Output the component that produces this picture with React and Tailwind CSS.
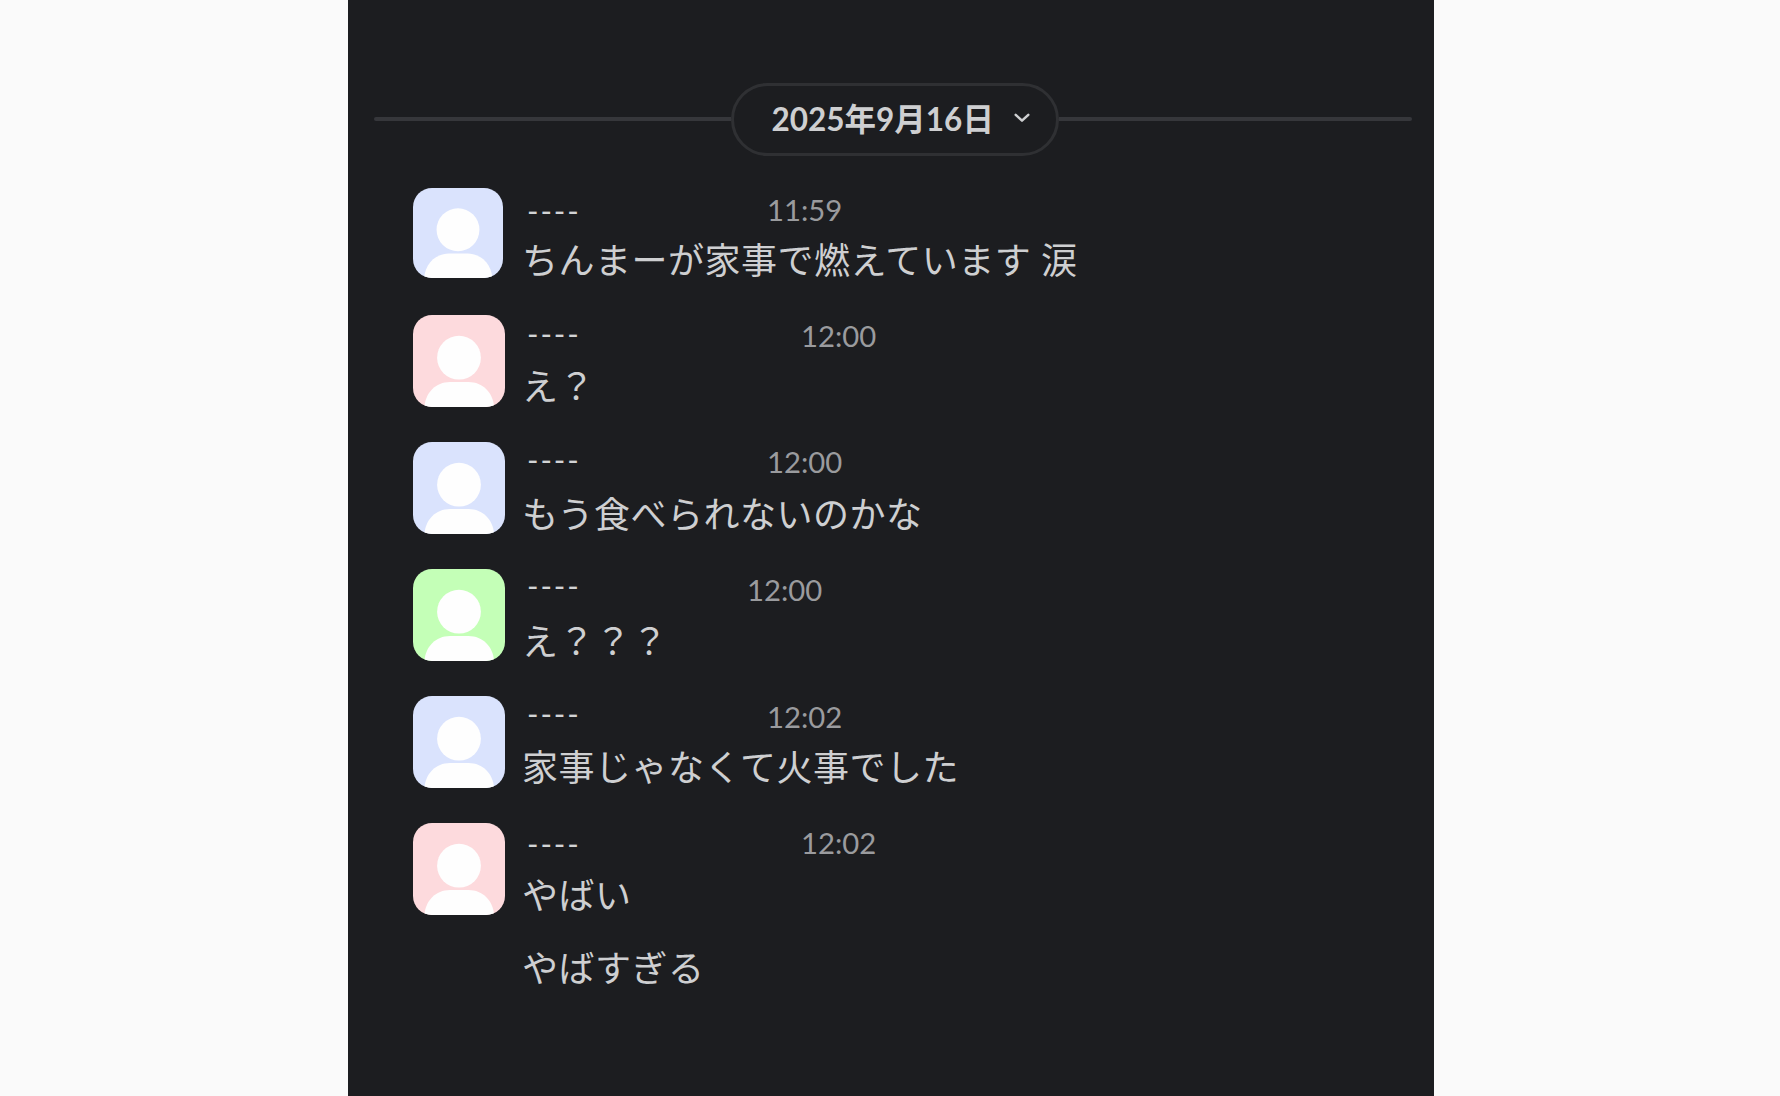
const messages = [
  {
    time: "11:59",
    avatar: "bg-[#dae3fd]",
    size: "size-[90px]",
    namePos: "pt-[20px]",
    timePos: "ml-[186px] pt-[11px]",
    textPos: "mt-[50px]",
    texts: ["ちんまーが家事で燃えています 涙"],
  },
  {
    time: "12:00",
    avatar: "bg-[#fddadd]",
    size: "size-[92px]",
    namePos: "pt-[16px]",
    timePos: "ml-[220px] pt-[10px]",
    textPos: "mt-[49px]",
    texts: ["え？"],
  },
  {
    time: "12:00",
    avatar: "bg-[#dae3fd]",
    size: "size-[92px]",
    namePos: "pt-[15px]",
    timePos: "ml-[186px] pt-[9px]",
    textPos: "mt-[50px]",
    texts: ["もう食べられないのかな"],
  },
  {
    time: "12:00",
    avatar: "bg-[#c4ffb7]",
    size: "size-[92px]",
    namePos: "pt-[14px]",
    timePos: "ml-[166px] pt-[10px]",
    textPos: "mt-[50px]",
    texts: ["え？？？"],
  },
  {
    time: "12:02",
    avatar: "bg-[#dae3fd]",
    size: "size-[92px]",
    namePos: "pt-[15px]",
    timePos: "ml-[186px] pt-[10px]",
    textPos: "mt-[49px]",
    texts: ["家事じゃなくて火事でした"],
  },
  {
    time: "12:02",
    avatar: "bg-[#fddadd]",
    size: "size-[92px]",
    namePos: "pt-[18px]",
    timePos: "ml-[220px] pt-[9px]",
    textPos: "mt-[50px]",
    texts: ["やばい", "やばすぎる"],
  },
];

function Avatar({ color, size }) {
  return (
    <div className={`shrink-0 overflow-hidden rounded-[19px] ${size} ${color}`}>
      <svg viewBox="0 0 92 92" className="block size-full" fill="#fefefe">
        <circle cx="46" cy="42.7" r="21.9" />
        <path d="M11.5 93V91.5C12.5 78 22.5 67 37 67H55.5C70 67 80 78 81 91.5V93Z" />
      </svg>
    </div>
  );
}

function DateDivider({ label }) {
  return (
    <div className="ml-[26px] mr-[22px] flex h-[73px] items-start">
      <div className="mt-[33.5px] h-1 w-[357px] rounded-l-full bg-[#36373b]" />
      <button className="flex h-[73px] w-[328px] items-center rounded-full border-[3px] border-[#2f3033] pl-[37.5px]">
        <span className="mt-px whitespace-nowrap text-[31.5px] leading-none font-bold text-[#cecfd1]">
          {label}
        </span>
        <svg
          viewBox="0 0 20 14"
          className="mb-[4px] ml-[18.5px] h-[14px] w-[20px] shrink-0"
          fill="none"
          stroke="#cecfd1"
          strokeWidth="2.5"
          strokeLinecap="round"
          strokeLinejoin="round"
        >
          <path d="M3.7 3.8L10 9.6L16.3 3.8" />
        </svg>
      </button>
      <div className="mt-[33.5px] h-1 flex-1 rounded-r-full bg-[#36373b]" />
    </div>
  );
}

function Message({ message }) {
  return (
    <div className="flex h-[127px] items-start">
      <div className="w-[109px] shrink-0">
        <Avatar color={message.avatar} size={message.size} />
      </div>
      <div>
        <div className="flex h-0 items-start leading-none">
          <span
            className={`ml-[5px] w-[54px] whitespace-nowrap text-[31px] leading-[4px] tracking-[1.9px] text-[#d2d3d5] ${message.namePos}`}
          >
            ----
          </span>
          <span
            className={`text-[29.3px] leading-[22px] text-[#9a9b9e] ${message.timePos}`}
          >
            {message.time}
          </span>
        </div>
        <div className={`flex flex-col gap-[29px] ${message.textPos}`}>
          {message.texts.map((text) => (
            <p
              key={text}
              className="whitespace-nowrap text-[36px] leading-[44px] tracking-[0.5px] text-[#cecfd1]"
            >
              {text}
            </p>
          ))}
        </div>
      </div>
    </div>
  );
}

export default function App() {
  return (
    <div className="flex h-[1096px] w-full justify-center bg-[#fafafa] font-['Lato','Noto_Sans_CJK_JP',sans-serif]">
      <main className="ml-[2px] h-full w-[1086px] overflow-hidden bg-[#1c1d20] pt-[83px]">
        <DateDivider label="2025年9月16日" />
        <div className="mt-[32px] pl-[65px]">
          {messages.map((message, idx) => (
            <Message key={idx} message={message} />
          ))}
        </div>
      </main>
    </div>
  );
}
